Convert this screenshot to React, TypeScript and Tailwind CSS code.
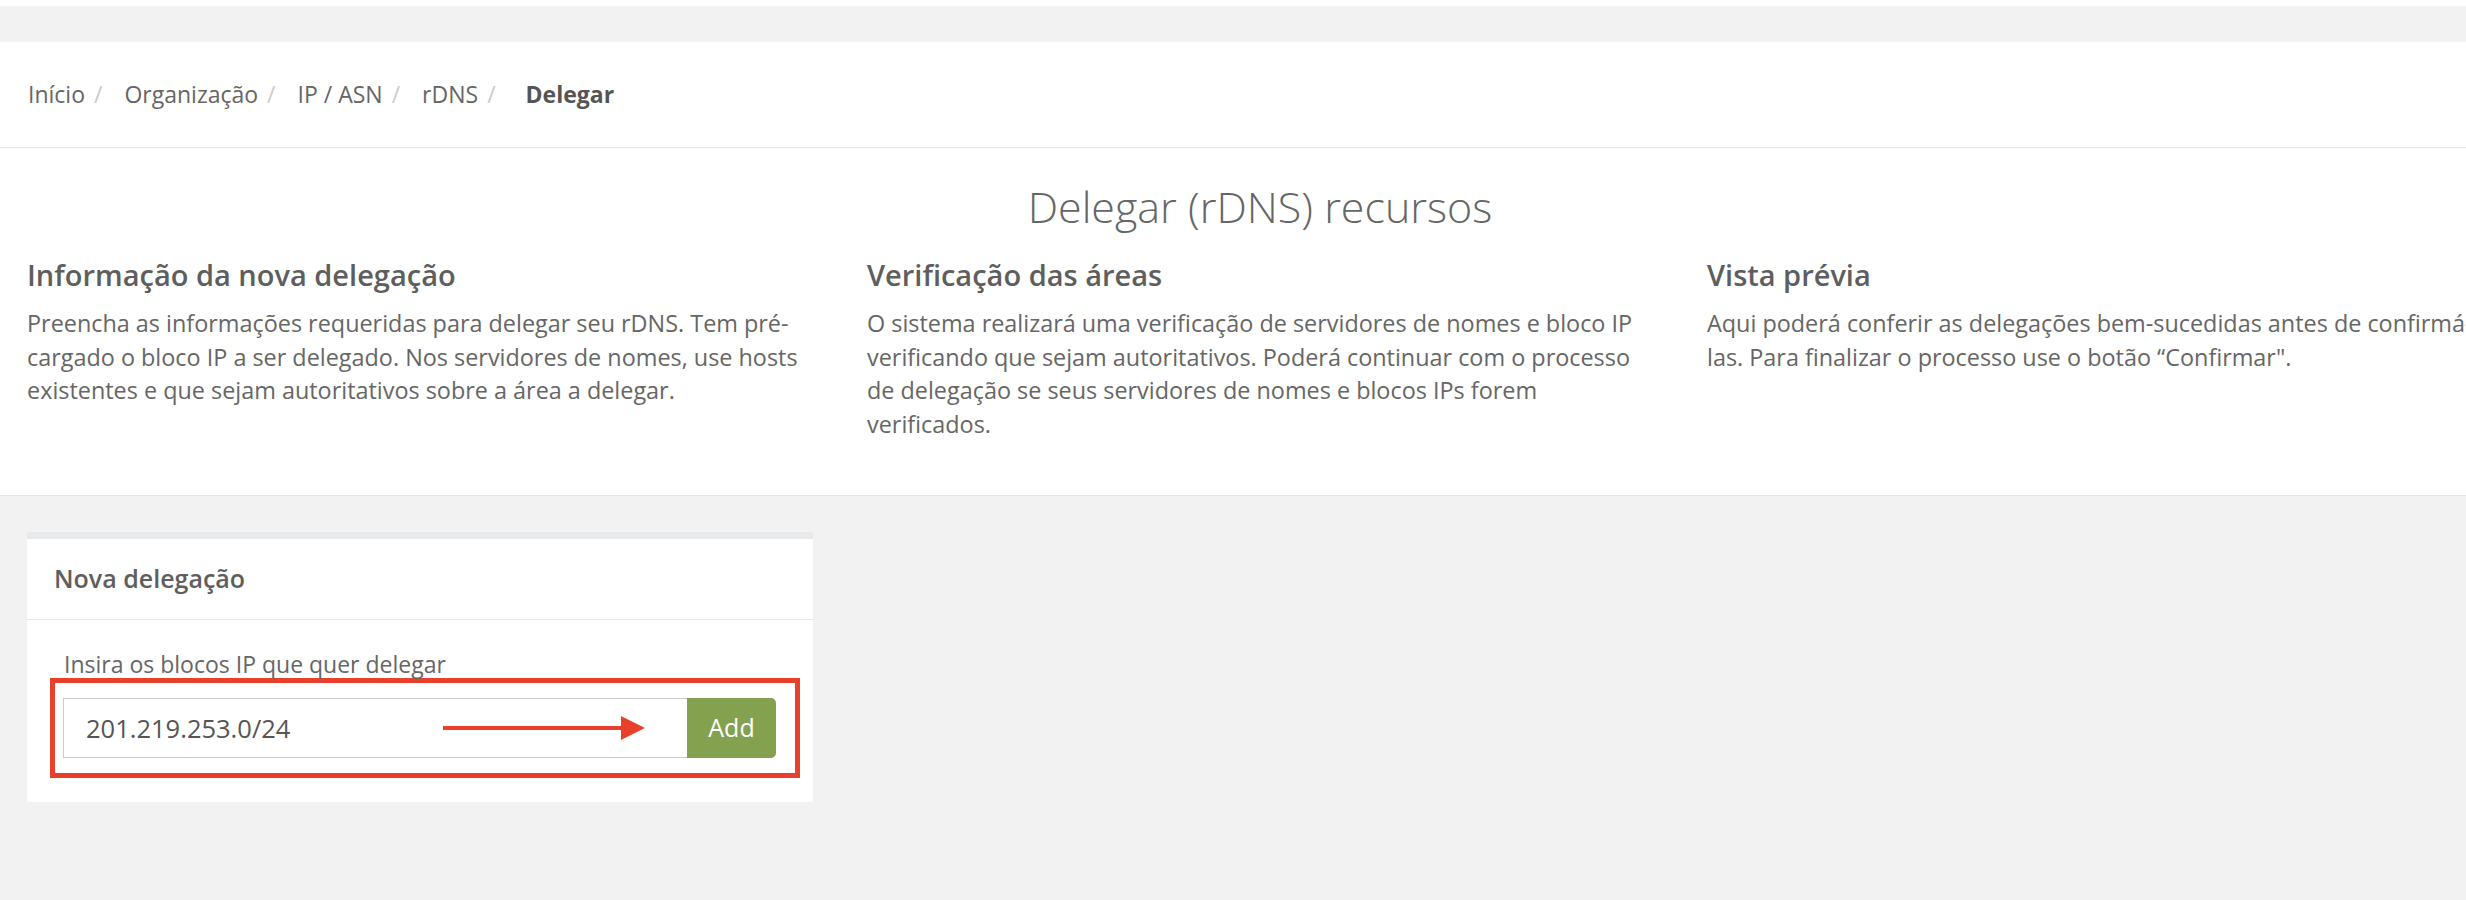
import React from 'react'

const crumbs = [
  { label: 'Início', extra: '' },
  { label: 'Organização', extra: '' },
  { label: 'IP / ASN', extra: '' },
  { label: 'rDNS', extra: 'pr-[8px]' },
]

const steps = [
  {
    title: 'Informação da nova delegação',
    text: 'Preencha as informações requeridas para delegar seu rDNS. Tem pré-cargado o bloco IP a ser delegado. Nos servidores de nomes, use hosts existentes e que sejam autoritativos sobre a área a delegar.',
  },
  {
    title: 'Verificação das áreas',
    text: 'O sistema realizará uma verificação de servidores de nomes e bloco IP verificando que sejam autoritativos. Poderá continuar com o processo de delegação se seus servidores de nomes e blocos IPs forem verificados.',
  },
  {
    title: 'Vista prévia',
    text: 'Aqui poderá conferir as delegações bem-sucedidas antes de confirmá-las. Para finalizar o processo use o botão “Confirmar".',
  },
]

export default function App() {
  return (
    <div className="min-h-screen w-full overflow-hidden bg-[#f2f2f2] font-['Open_Sans',sans-serif] text-[#666]">
      <div className="w-[2520px]">
        {/* top strip */}
        <div className="h-[6px] bg-white"></div>
        <div className="h-[36px] bg-[#f2f2f2]"></div>

        {/* breadcrumb */}
        <nav className="flex h-[106px] items-center border-b border-[#e6e6e6] bg-white pl-[28px] text-[23px]">
          {crumbs.map((c) => (
            <span key={c.label} className={`flex items-center ${c.extra}`}>
              <span>{c.label}</span>
              <span className="ml-[9px] mr-[22px] text-[#ccc]">/</span>
            </span>
          ))}
          <span className="font-bold text-[#555]">Delegar</span>
        </nav>

        {/* intro */}
        <section className="border-b border-[#e6e6e6] bg-white pt-[33px] pb-[54px]">
          <h1 className="text-center text-[43px] font-light leading-[52px] text-[#666]">Delegar (rDNS) recursos</h1>
          <div className="mt-[24px] grid grid-cols-3">
            {steps.map((s) => (
              <div key={s.title} className="px-[27px]">
                <h2 className="text-[29px] font-semibold leading-[35px] text-[#5e5e5e]">{s.title}</h2>
                <p className="mt-[15px] text-[23.4px] leading-[33.5px]">{s.text}</p>
              </div>
            ))}
          </div>
        </section>

        {/* form card */}
        <div className="pt-[36px] pl-[27px]">
          <div className="w-[786px] border-t-[7px] border-[#e8e9eb] bg-white">
            <div className="flex h-[81px] items-center border-b border-[#e8e8e8] pl-[27px] text-[25px] font-semibold text-[#5e5e5e]">
              Nova delegação
            </div>
            <div className="pt-[30px] pb-[24px]">
              <label className="block pl-[37px] text-[23px] leading-[28px]">Insira os blocos IP que quer delegar</label>
              <div className="ml-[23px] mr-[13px] border-[5px] border-[#e8402a] py-[15px] pl-[8px] pr-[19px]">
                <div className="relative flex h-[60px]">
                  <input
                    className="h-full flex-1 border border-r-0 border-[#ccc] pl-[22px] text-[25.5px] text-[#555] outline-none"
                    defaultValue="201.219.253.0/24"
                  />
                  <button className="h-full w-[89px] rounded-r-[5px] bg-[#83a14f] text-[25px] text-white">Add</button>
                  <svg className="absolute left-[380px] top-[18px]" width="202" height="24" viewBox="0 0 202 24">
                    <rect x="0" y="10" width="180" height="4" fill="#e8402a" />
                    <polygon points="178,0 202,12 178,24" fill="#e8402a" />
                  </svg>
                </div>
              </div>
            </div>
          </div>
        </div>
      </div>
    </div>
  )
}
